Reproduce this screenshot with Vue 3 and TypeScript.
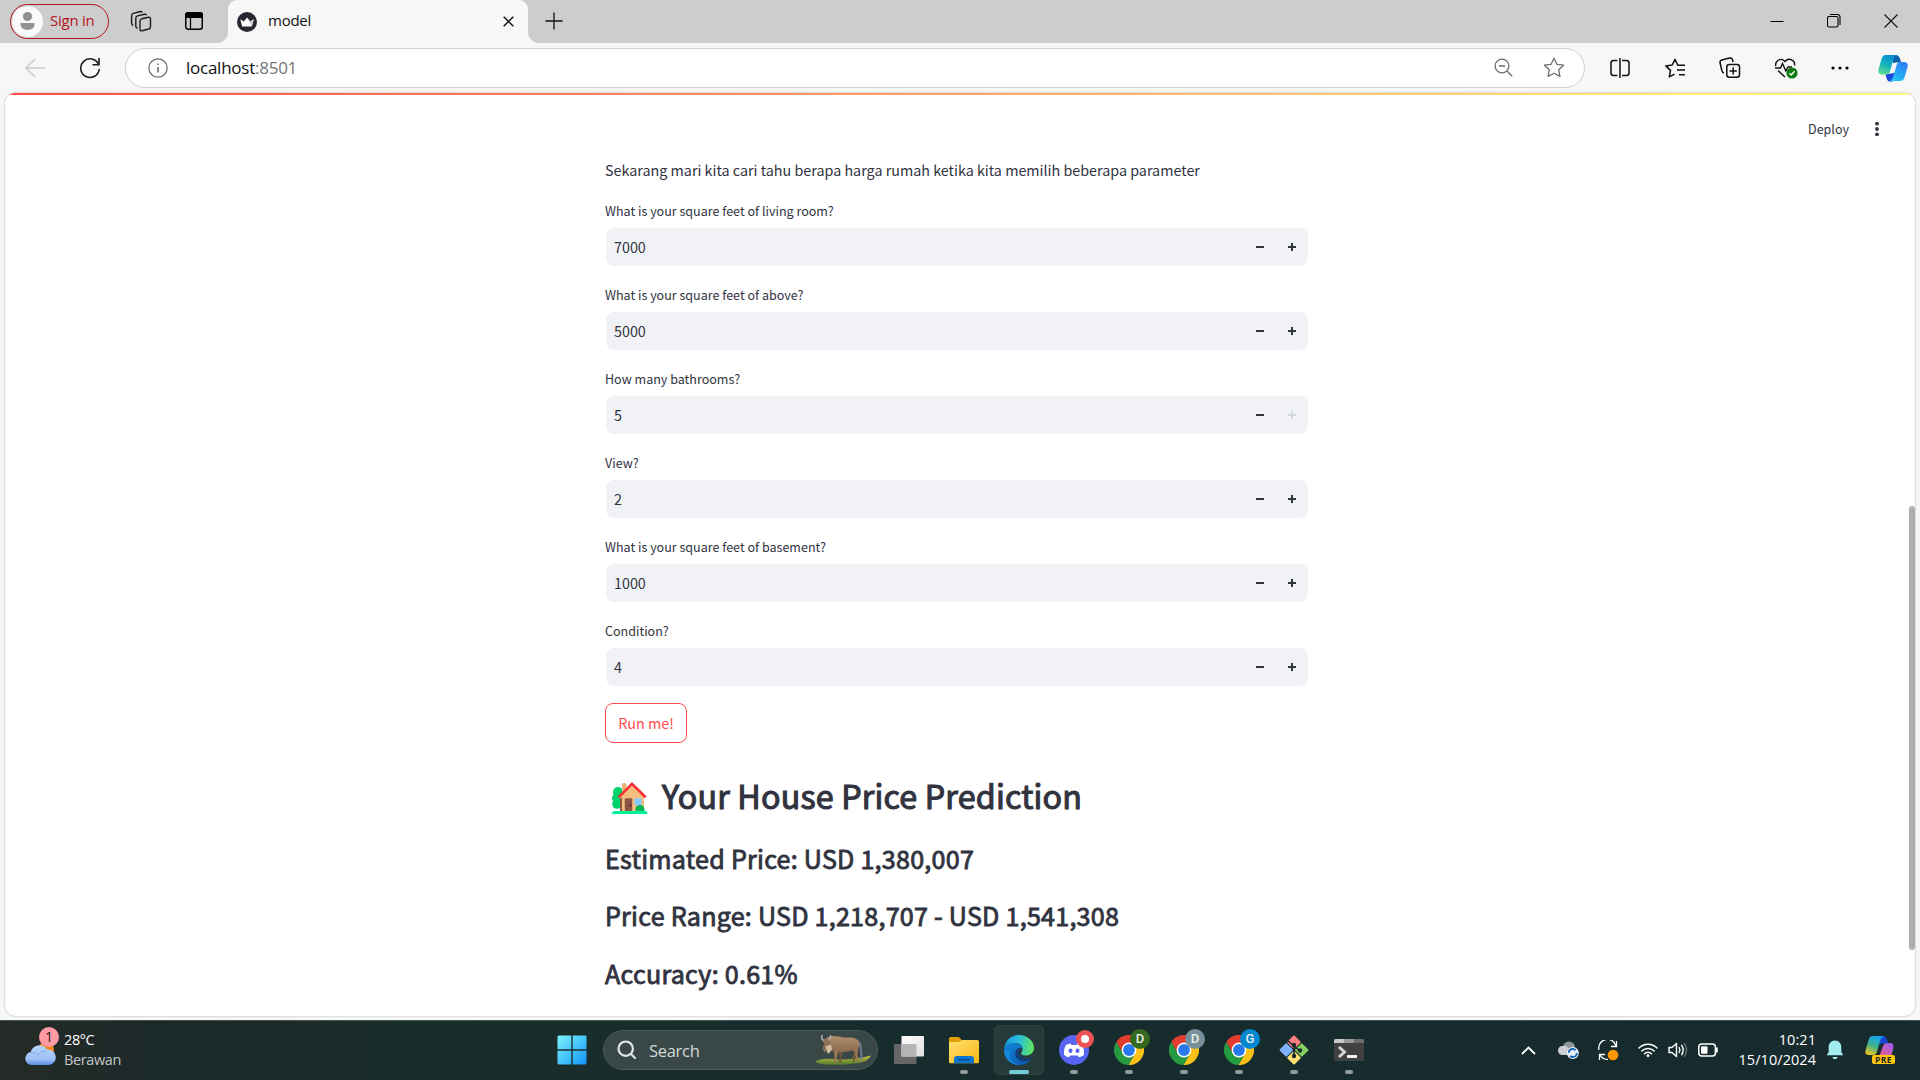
<script setup lang="ts">
interface Field {
  label: string
  value: number
  maxed?: boolean
}

interface TaskApp {
  name: string
  kind: 'folder' | 'edge' | 'discord' | 'chrome' | 'git' | 'terminal'
  badge?: string
  color?: string
}

const fields: Field[] = [
  { label: 'What is your square feet of living room?', value: 7000 },
  { label: 'What is your square feet of above?', value: 5000 },
  { label: 'How many bathrooms?', value: 5, maxed: true },
  { label: 'View?', value: 2 },
  { label: 'What is your square feet of basement?', value: 1000 },
  { label: 'Condition?', value: 4 },
]

const results: string[] = [
  'Estimated Price: USD 1,380,007',
  'Price Range: USD 1,218,707 - USD 1,541,308',
  'Accuracy: 0.61%',
]

const apps: TaskApp[] = [
  { name: 'files', kind: 'folder' },
  { name: 'edge', kind: 'edge' },
  { name: 'discord', kind: 'discord' },
  { name: 'chrome-1', kind: 'chrome', badge: 'D', color: '#33691e' },
  { name: 'chrome-2', kind: 'chrome', badge: 'D', color: '#78909c' },
  { name: 'chrome-3', kind: 'chrome', badge: 'G', color: '#0288d1' },
  { name: 'git', kind: 'git' },
  { name: 'terminal', kind: 'terminal' },
]
</script>

<template>
  <div class="desktop">
    <header class="tabstrip">
      <div class="signin">
        <svg class="avatar" width="31" height="31" viewBox="0 0 31 31">
          <circle cx="15.5" cy="15.5" r="15.5" fill="#fafafa" />
          <circle cx="15.5" cy="10.5" r="4.6" fill="#919191" />
          <path d="M8.5 17h14v1.2c0 3.600-3 5.600-7 5.600s-7-2-7-5.600z" fill="#919191" />
        </svg>
        <span>Sign in</span>
      </div>
      <svg class="workspaces" width="22" height="22" viewBox="0 0 22 22" fill="none" stroke="#1b1b1b" stroke-width="1.4" stroke-linejoin="round">
        <path d="M11.800 8.800 18.500 7.200q2-.3 2 1.700v7.500q0 2-1.800 2.600l-6.700 1.800q-2 .4-2-1.600V11q0-1.700 1.800-2.200z" />
        <path d="M7.500 18.200q-1.700-.4-1.700-2V8.300q0-1.900 1.800-2.400L14.500 4.200q1.700-.3 2 1.200" />
        <path d="M3.300 15.500q-1.700-.6-1.700-2.200V5.700q0-1.900 1.800-2.400L10.200 1.500q1.700-.3 2 1" />
      </svg>
      <svg class="tabmenu" width="20" height="20" viewBox="0 0 20 20">
        <rect x="1.750" y="1.750" width="16.500" height="16.500" rx="2.500" fill="none" stroke="#000" stroke-width="1.500" />
        <path d="M1 7V4a3 3 0 0 1 3-3h12a3 3 0 0 1 3 3v3z" />
        <path d="M6.500 6v12" stroke="#000" stroke-width="1.300" />
      </svg>
      <div class="tab">
        <svg width="20" height="20" viewBox="0 0 20 20">
          <circle cx="10" cy="10" r="10" fill="#262730" />
          <path d="M3.200 7.200 6.800 9.500 10 5.500l3.200 4 3.600-2.300-2 7.300H5.200z" fill="#fff" />
          <path d="M10 5.500l3.200 4 3.600-2.300-2 7.300z" fill="#d0d0d4" />
        </svg>
        <span class="tab-title">model</span>
        <svg width="11" height="11" viewBox="0 0 11 11" stroke="#111" stroke-width="1.500"><path d="M.7.7l9.600 9.600M10.300.7.7 10.300" /></svg>
      </div>
      <svg class="newtab" width="18" height="18" viewBox="0 0 18 18" stroke="#111" stroke-width="1.300"><path d="M9 .5v17M.5 9h17" /></svg>
      <div class="window-controls">
        <svg width="14" height="14" viewBox="0 0 14 14" fill="none" stroke="#000"><path d="M.5 7.500h13" /></svg>
        <svg width="14" height="14" viewBox="0 0 14 14" fill="none" stroke="#000" stroke-width="1.100">
          <rect x=".5" y="2.500" width="10.500" height="10.500" rx="1.500" />
          <path d="M3 .5h7.500a2.500 2.500 0 0 1 2.500 2.500V11" />
        </svg>
        <svg width="14" height="14" viewBox="0 0 14 14" fill="none" stroke="#111" stroke-width="1.100"><path d="M.5.5l13 13M13.500.5l-13 13" /></svg>
      </div>
    </header>

    <nav class="toolbar">
      <svg class="back" width="21" height="20" viewBox="0 0 21 20" fill="none" stroke="#cbcbcb" stroke-width="1.500"><path d="M20 10H1M10 1 1 10l9 9" /></svg>
      <svg class="reload" width="22" height="22" viewBox="0 0 22 22" fill="none" stroke="#1b1b1b" stroke-width="1.600">
        <path d="M19.600 7.500A9.300 9.300 0 1 0 20.300 12" /><path d="M20 1v6.700h-6.500" />
      </svg>
      <div class="address">
        <svg class="info" width="20" height="20" viewBox="0 0 20 20" fill="none" stroke="#6b6b6b" stroke-width="1.200">
          <circle cx="10" cy="10" r="9.200" /><path d="M10 9v5.500M10 5.500v1.600" stroke-width="1.500" />
        </svg>
        <span class="url">localhost<i>:8501</i></span>
        <svg class="zoomout" width="19" height="19" viewBox="0 0 19 19" fill="none" stroke="#6d6d6d" stroke-width="1.300">
          <circle cx="8" cy="8" r="6.900" /><path d="M5 8h6M13 13l5.200 5.200" />
        </svg>
        <svg class="star" width="22" height="21" viewBox="0 0 22 21" fill="none" stroke="#6d6d6d" stroke-width="1.300" stroke-linejoin="round">
          <path d="M11 1.300 13.900 7.300 20.600 8.200 15.700 12.800 17 19.400 11 16.200 5 19.400 6.300 12.800 1.400 8.200 8.100 7.300z" />
        </svg>
      </div>
      <div class="tools">
        <svg width="22" height="22" viewBox="0 0 22 22" fill="none" stroke="#111" stroke-width="1.500">
          <path d="M8.500 3.500H4.500A2.500 2.500 0 0 0 2 6v10a2.500 2.500 0 0 0 2.500 2.500h4M13 3.500h4.500A2.500 2.500 0 0 1 20 6v10a2.500 2.500 0 0 1-2.500 2.500H13M11 1v20" />
        </svg>
        <svg width="22" height="22" viewBox="0 0 22 22" fill="none" stroke="#111" stroke-width="1.500" stroke-linejoin="round">
          <path d="M21 8.300h-7.200L11 2.300 8.200 8 1.800 8.900l4.700 4.500-1.200 6.500 5.200-2.800M13 13h8M15 17.800h6" />
        </svg>
        <svg width="22" height="22" viewBox="0 0 22 22" fill="none" stroke="#111" stroke-width="1.500">
          <rect x="7.800" y="7.500" width="12.700" height="12.700" rx="2.500" />
          <path d="M14.200 10.300v7.200M10.600 13.900h7.200M5 16a3 3 0 0 1-2-2L1 5.800A2.500 2.500 0 0 1 2.800 3L10.500 1a2.500 2.500 0 0 1 3 1.800L14 5" />
        </svg>
        <svg width="24" height="22" viewBox="0 0 24 22" fill="none" stroke="#111" stroke-width="1.400">
          <path d="M1.800 9C.8 3.500 7 0 11 4.500 15 0 21.500 3.300 20.500 8.500M1 11h5.500l2-4.500 3.300 7.500 2.200-4h4M4 13.500l7 6.500" />
          <circle cx="18" cy="16" r="5.600" fill="#107c10" stroke="none" />
          <path d="m15.500 16.300 1.700 1.600 3.400-3.600" stroke="#fff" />
        </svg>
        <svg width="18" height="6" viewBox="0 0 18 6"><circle cx="2" cy="3" r="1.600" /><circle cx="9" cy="3" r="1.600" /><circle cx="16" cy="3" r="1.600" /></svg>
        <svg class="cp" width="30" height="28" viewBox="0 0 30 28">
          <defs>
            <linearGradient id="cpA" x1=".6" y1="0" x2=".2" y2="1"><stop offset="0" stop-color="#0a8fd6" /><stop offset=".5" stop-color="#12b3b8" /><stop offset="1" stop-color="#62de8c" /></linearGradient>
            <linearGradient id="cpB" x1=".8" y1="0" x2=".2" y2="1"><stop offset="0" stop-color="#2f7df6" /><stop offset="1" stop-color="#21c7f5" /></linearGradient>
          </defs>
          <path d="M13 19.500 20 18l-5 9q-1.500 1-3.500.5C9 27 8.500 24 7.500 20.500z" fill="#1b49df" />
          <path d="M14 1h4c3 0 4 3.500 5 7l-8 1z" fill="#0b62a8" />
          <path d="M8 1h11c-2.500.5-3.300 3-4 5.500l-3 11C11.400 19.500 10.500 20.500 8 20.500H4C1 20.500-.2 18.500.5 15.500L3.500 5C4.300 2.500 5.500 1 8 1z" fill="url(#cpA)" />
          <path d="M22 8h4c3 0 4.300 2 3.600 5l-3 10c-.8 2.500-2 4-4.500 4H11.500c2.500-.5 3.300-3 4-5.500l3-10C19.200 9.200 20 8 22 8z" fill="url(#cpB)" />
        </svg>
      </div>
    </nav>

    <main class="page">
      <div class="rainbow"></div>
      <div class="app-header">
        <span>Deploy</span>
        <svg width="6" height="16" viewBox="0 0 6 16" fill="#31333f"><circle cx="3" cy="2.700" r="1.900" /><circle cx="3" cy="8" r="1.900" /><circle cx="3" cy="13.300" r="1.900" /></svg>
      </div>
      <div class="column">
        <p class="intro">Sekarang mari kita cari tahu berapa harga rumah ketika kita memilih beberapa parameter</p>
        <div v-for="f in fields" :key="f.label" class="field">
          <label>{{ f.label }}</label>
          <div class="input">
            <span>{{ f.value }}</span>
            <svg width="8" height="8" viewBox="0 0 8 8" shape-rendering="crispEdges"><path d="M0 3h8v2H0z" fill="#31333f" /></svg>
            <svg width="8" height="8" viewBox="0 0 8 8" shape-rendering="crispEdges"><path d="M0 3h3V0h2v3h3v2H5v3H3V5H0z" :fill="f.maxed ? '#d5d8e3' : '#31333f'" /></svg>
          </div>
        </div>
        <button class="run">Run me!</button>
        <h1>
          <svg width="36" height="33" viewBox="0 0 36 33">
            <circle cx="6" cy="11" r="5" fill="#00d26a" /><circle cx="4.500" cy="17" r="4.500" fill="#00d26a" /><circle cx="5" cy="23" r="4.800" fill="#00d26a" />
            <path d="M10 3.500q0-1.500 1.500-1.500H13q1.500 0 1.500 1.500V12H10z" fill="#e9b577" />
            <path d="M8 15 20 3l12 12v15H8z" fill="#f3bd7e" />
            <path d="M8 18v12h2V16z" fill="#8c5543" />
            <rect x="12.800" y="17.300" width="7.400" height="12.700" rx="1" fill="#8c5543" /><circle cx="18.300" cy="24.500" r=".9" fill="#321b41" />
            <rect x="22.500" y="17.300" width="7" height="7" rx=".8" fill="#83cbff" />
            <path d="M6.500 16.300 20 2.800l13.700 13.500" fill="none" stroke="#f92f3a" stroke-width="2.600" />
            <circle cx="28" cy="28.500" r="4.500" fill="#00b259" />
            <path d="M0 33q0-3 2.500-3h30.500q2.500 0 2.500 3z" fill="#00f397" />
          </svg>
          <span>Your House Price Prediction</span>
        </h1>
        <h3 v-for="r in results" :key="r">{{ r }}</h3>
      </div>
      <div class="scroll-thumb"></div>
    </main>

    <footer class="taskbar">
      <div class="weather">
        <svg width="36" height="38" viewBox="0 0 36 38">
          <defs>
            <linearGradient id="cloud" x1="0" y1="0" x2="0" y2="1"><stop offset="0" stop-color="#b5d3fb" /><stop offset=".7" stop-color="#9fc1f5" /><stop offset="1" stop-color="#5d8ee6" /></linearGradient>
          </defs>
          <circle cx="21" cy="22" r="8" fill="#f7891c" />
          <path d="M6.500 37a6.500 6.500 0 0 1-.8-12.900A9 9 0 0 1 22 21.500a7.800 7.800 0 0 1 2 15.500z" fill="url(#cloud)" />
          <path d="M6 25q4-1 7 2 3-5 8-4" fill="none" stroke="#7fa8ec" stroke-width="1" />
        </svg>
        <b class="count">1</b>
        <div class="weather-text"><span>28°C</span><span class="dim">Berawan</span></div>
      </div>

      <svg class="start" width="30" height="30" viewBox="0 0 30 30">
        <defs><linearGradient id="win" x1="0" y1="0" x2="1" y2="1"><stop offset="0" stop-color="#7ef3ff" /><stop offset="1" stop-color="#0f95f7" /></linearGradient></defs>
        <path d="M1.500.5H14.300V14.300H.5V1.500zM15.700.5H28.500l1 1V14.300H15.700zM.5 15.700H14.300V29.500H1.500l-1-1zM15.700 15.700H29.500V28.500l-1 1H15.700z" fill="url(#win)" />
      </svg>
      <div class="search">
        <svg width="20" height="20" viewBox="0 0 20 20" fill="none" stroke="#dfe5e5" stroke-width="2.200" stroke-linecap="round"><circle cx="8.700" cy="8.700" r="7.200" /><path d="m14 14 4 4" /></svg>
        <span>Search</span>
        <svg class="gnu" width="58" height="32" viewBox="0 0 58 32">
          <defs>
            <linearGradient id="grass" x1="0" y1="0" x2="0" y2="1"><stop offset="0" stop-color="#c6c13e" /><stop offset="1" stop-color="#4d7a2d" /></linearGradient>
            <linearGradient id="hide" x1="0" y1="0" x2="0" y2="1"><stop offset="0" stop-color="#b08c68" /><stop offset="1" stop-color="#8a6a50" /></linearGradient>
          </defs>
          <path d="M1 28C5 24.500 14 24 25 25.500c12 0 22-1.500 32-4-2 5-10 8-17 8-14 2-32 2-39-1.500z" fill="url(#grass)" />
          <path d="M44.500 8q2.500 2 2.500 8l.7 10" fill="none" stroke="#777c9c" stroke-width="1.800" />
          <path d="M24 17l1.500 5-.5 7h1.800l.7-7 1.500-5zM38.500 15l2 4-2 4 .5 5h1.600l.4-4.500 2.500-5V14z" fill="#73563f" />
          <path d="M11 5c3-2.500 7-3.500 11-2.800 4 .3 8 1.600 12 1.300 5-.5 9 .5 11 4 .8 3 .5 7-2 9.500-2 .8-4 .2-6-.3-4 1.300-8 1.500-12 1-3 .5-6 0-7.500-1.500-2-3-3-7-6.500-11.200z" fill="url(#hide)" />
          <path d="M20 16l4 1.500-1 5.500-1 6.500h-1.900l.3-7zM40 15h4l-.7 5 1.700 7.500h-1.800L41 20z" fill="#9a7755" />
          <path d="M8.500 5.500 14 4.500l3 5 .5 6-4 4-.8-2.500-2 1.500-2-3.500 1.300-5z" fill="#8d705a" />
          <path d="M11.500 12.500l5.500-2 1 5-3.500 4.500-1.500-3z" fill="#d4be9f" />
          <path d="M9.500 6.500Q6.500 4 8.300 1M14.500 5.500q3.500-1.300 1.700-4.500" fill="none" stroke="#b3b5b2" stroke-width="1.400" />
        </svg>
      </div>
      <svg class="taskview" width="30" height="28" viewBox="0 0 30 28">
        <defs><linearGradient id="tv" x1="0" y1="0" x2="1" y2="1"><stop offset="0" stop-color="#fff" /><stop offset="1" stop-color="#dedede" /></linearGradient></defs>
        <rect y="8" width="22.500" height="20" rx="1" fill="#666" /><rect x="7.500" width="22.500" height="20.500" rx="1" fill="url(#tv)" />
        <path d="M7.500 8h15v12.500h-15z" fill="#b4b4b4" />
      </svg>

      <div class="apps">
        <div v-for="a in apps" :key="a.name" class="slot" :class="{ active: a.kind === 'edge' }">
          <svg v-if="a.kind === 'folder'" width="30" height="30" viewBox="0 0 30 30">
            <defs><linearGradient id="fold" x1="0" y1="0" x2="1" y2="1"><stop offset="0" stop-color="#ffdf70" /><stop offset="1" stop-color="#fbb912" /></linearGradient></defs>
            <path d="M0 3.500Q0 2 1.500 2H9q1 0 2 1l2 2.500V10H0z" fill="#e09f05" />
            <path d="M0 7h10l3-2h15.500Q30 5 30 6.500V27q0 1.300-1.300 1.300H1.300Q0 28.300 0 27z" fill="url(#fold)" />
            <path d="M5 28.300V24q0-3 3-3h14q3 0 3 3v4.300z" fill="#0b74cd" /><path d="M9 24.800h12" stroke="#06478e" stroke-width="1.300" />
          </svg>
          <svg v-else-if="a.kind === 'edge'" width="30" height="30" viewBox="0 0 30 30">
            <defs>
              <linearGradient id="eA" x1="0" y1=".3" x2="1" y2=".4"><stop offset="0" stop-color="#1b94dc" /><stop offset=".5" stop-color="#2cc0dc" /><stop offset="1" stop-color="#62e35c" /></linearGradient>
              <linearGradient id="eB" x1="0" y1="0" x2=".7" y2="1"><stop offset="0" stop-color="#1285d8" /><stop offset="1" stop-color="#0c5cb5" /></linearGradient>
            </defs>
            <path d="M.3 13C1.500 5 7.500 0 15 0c8.500 0 15 6 15 13 0 5-4 7.500-8.500 7.500-3 0-4.500-1.200-4.500-2.300 0-.8 1.500-1.200 1.500-4C18.500 9 12 7 7 9 3.500 10.300 1 12 .3 13z" fill="url(#eA)" />
            <path d="M0 15C0 11 4 8 9 8c5.500 0 9.500 3 9.500 6-1-1.500-3-1.500-4.500-.5-4 3-3 8 1.500 11 4 2.500 8 1.500 11.500-.8C24.500 27.500 20.500 30 15 30 6.500 30 0 23.500 0 15z" fill="url(#eB)" />
            <path d="M14 13.500c-3.500 2.500-3.500 7-.5 10.500 3 3.300 9 3.500 14-.5.500-.5 0-1-.5-.7-4 1.700-9 .7-11-3-1-2-.8-4 .5-5.500 0-1.300-1.300-1.500-2.500-.8z" fill="#123f78" />
            <path d="M6 15.500C4 22 8 28.500 15 30 7.500 30 1 25 0 16z" fill="#1a9ae8" opacity=".55" />
          </svg>
          <svg v-else-if="a.kind === 'discord'" width="30" height="30" viewBox="0 0 30 30">
            <circle cx="15" cy="15" r="15" fill="#5865f2" />
            <path d="M11.500 8.500Q9 9 7 10 4.500 14 5 20q2.500 2 5 2.200l1.200-1.800h7.600l1.200 1.800Q22.500 22 25 20q.5-6-2-10-2-1-4.500-1.500l-1 1.500h-5z" fill="#fff" />
            <ellipse cx="11.500" cy="15.700" rx="2" ry="2.200" fill="#5865f2" /><ellipse cx="18.500" cy="15.700" rx="2" ry="2.200" fill="#5865f2" />
          </svg>
          <svg v-else-if="a.kind === 'chrome'" width="30" height="30" viewBox="0 0 30 30">
            <path d="M2.300 7A15 15 0 0 1 28.300 8L15 15l-6 3.500z" fill="#e33b2e" />
            <path d="M28.300 8A15 15 0 0 1 14.400 30L21.060 18.500 15 8z" fill="#fbc116" />
            <path d="M14.400 30A15 15 0 0 1 2.300 7L8.940 18.500l12.120 0z" fill="#249a41" />
            <circle cx="15" cy="15" r="7.400" fill="#fff" /><circle cx="15" cy="15" r="5.900" fill="#2a79ec" />
          </svg>
          <svg v-else-if="a.kind === 'git'" width="30" height="30" viewBox="0 0 30 30">
            <g transform="rotate(45 15 15)">
              <rect x="4.500" y="4.500" width="10" height="10" rx="1" fill="#ff7f7f" /><rect x="15.500" y="4.500" width="10" height="10" rx="1" fill="#85d061" />
              <rect x="4.500" y="15.500" width="10" height="10" rx="1" fill="#80b3ff" /><rect x="15.500" y="15.500" width="10" height="10" rx="1" fill="#ffe070" />
            </g>
            <path d="M8.500 5.500 15 11v10M15 11l6 5" fill="none" stroke="#172b2c" stroke-width="1.600" />
            <circle cx="15" cy="10" r="2.200" fill="#172b2c" /><circle cx="15" cy="21" r="2.200" fill="#172b2c" /><circle cx="21" cy="15.500" r="2.200" fill="#172b2c" />
          </svg>
          <svg v-else width="30" height="30" viewBox="0 0 30 30">
            <rect y="4" width="30" height="22" rx="1.500" fill="#414141" />
            <path d="M0 8V5.500Q0 4 1.500 4H10v4z" fill="#c9c9c9" /><path d="M10 4h10v4H10z" fill="#999" /><path d="M20 4h8.500Q30 4 30 5.500V8H20z" fill="#6d6d6d" />
            <path d="m5 12 5.500 5L5 22" fill="none" stroke="#d2d2d2" stroke-width="3" /><path d="M13 21.500h10" stroke="#fff" stroke-width="2.800" />
          </svg>
          <i v-if="a.kind === 'discord'" class="rec"></i>
          <b v-if="a.badge" class="profile" :style="{ background: a.color }">{{ a.badge }}</b>
          <u class="running"></u>
        </div>
      </div>

      <div class="tray">
        <svg class="chev" width="15" height="9" viewBox="0 0 15 9" fill="none" stroke="#fff" stroke-width="1.800"><path d="m1 8 6.500-6.500L14 8" /></svg>
        <svg class="onedrive" width="21" height="18" viewBox="0 0 21 18">
          <circle cx="11" cy="6.500" r="6" fill="#8f9696" /><path d="M4.500 14a4.500 4.500 0 0 1 0-9q4-1.500 6.500 3l6 6z" fill="#cdd1d1" />
          <circle cx="14.800" cy="12" r="6" fill="#e8f1fa" /><circle cx="14.800" cy="12" r="4" fill="none" stroke="#1764b5" stroke-width="1.800" stroke-dasharray="9 3.500" />
        </svg>
        <svg class="sync" width="21" height="21" viewBox="0 0 21 21" fill="none" stroke="#fff" stroke-width="1.300">
          <path d="M1 10A8.500 8.500 0 0 1 18 6M18.500 1v5.500H13M1.500 20v-5.500H7M2 15q2.500 4.500 8 4.500" />
          <circle cx="15" cy="15" r="5.300" fill="#ff9800" stroke="none" />
        </svg>
        <svg class="wifi" width="20" height="16" viewBox="0 0 20 16" fill="none" stroke="#fff" stroke-width="1.500" stroke-linecap="round">
          <path d="M1 6a12.500 12.500 0 0 1 18 0M3.800 9a8.800 8.800 0 0 1 12.400 0M6.500 11.800a5 5 0 0 1 7 0" /><circle cx="10" cy="13.700" r="1.400" fill="#fff" stroke="none" />
        </svg>
        <svg class="speaker" width="20" height="16" viewBox="0 0 20 16" fill="none" stroke="#fff" stroke-width="1.400" stroke-linecap="round" stroke-linejoin="round">
          <path d="M1 5.500h3L8.500 1.500v13L4 10.500H1zM11.200 5.500q1.500 2.500 0 5M13.700 3.300q3 4.700 0 9.400" /><path d="M16.500 1.500q4 6.500 0 13" opacity=".35" />
        </svg>
        <svg class="battery" width="21" height="14" viewBox="0 0 21 14" fill="none" stroke="#fff" stroke-width="1.500">
          <rect x=".8" y="1" width="16.600" height="12" rx="3" /><rect x="3" y="3.200" width="6.500" height="7.600" rx="1" fill="#fff" stroke="none" /><path d="M18.800 4.500v5" stroke-width="2" />
        </svg>
        <div class="clock"><span>10:21</span><span>15/10/2024</span></div>
        <svg class="bell" width="18" height="20" viewBox="0 0 18 20" fill="#a0ecee"><path d="M9 .5c4 0 6.300 3 6.300 6.500v5l2 3.300H.7L2.700 12V7C2.700 3.500 5 .5 9 .5zM6.300 17h5.400Q11 19.300 9 19.300T6.300 17z" /></svg>
        <div class="copilot">
          <svg width="29" height="24" viewBox="0 0 29 24">
            <defs>
              <linearGradient id="trA" x1=".6" y1="0" x2=".2" y2="1"><stop offset="0" stop-color="#16a3ef" /><stop offset=".5" stop-color="#3db18d" /><stop offset="1" stop-color="#f3c51b" /></linearGradient>
              <linearGradient id="trB" x1=".8" y1="0" x2=".3" y2="1"><stop offset="0" stop-color="#9a5cf0" /><stop offset="1" stop-color="#f8617f" /></linearGradient>
            </defs>
            <path d="M14 0h4c3 0 4 3.500 5 7l-8 1z" fill="#1747d1" />
            <path d="M8 0h11c-2.500.5-3.300 3-4 5.500l-3 10C11.400 17.500 10.500 19 8 19H4C1 19-.2 17.500.5 14.500L3.500 4C4.300 1.500 5.500 0 8 0z" fill="url(#trA)" />
            <path d="M22 7h3c3 0 4 2 3.300 5l-3 12H13l5-14C18.700 8.200 20 7 22 7z" fill="url(#trB)" />
          </svg>
          <b>PRE</b>
        </div>
      </div>
    </footer>
  </div>
</template>

<style>
html,
body {
  margin: 0;
  overflow: hidden;
}
</style>

<style scoped>
* {
  box-sizing: border-box;
}
svg {
  display: block;
  flex: none;
}
.desktop {
  width: 1920px;
  height: 1080px;
  display: flex;
  flex-direction: column;
  background: #f7f7f7;
  font-family: 'Open Sans', 'Noto Sans', sans-serif;
  white-space: nowrap;
}

/* Tab strip */
.tabstrip {
  height: 43px;
  flex: none;
  display: flex;
  align-items: center;
  background: #cdcdcd;
  padding-left: 10px;
}
.signin {
  width: 99px;
  height: 35px;
  display: flex;
  align-items: center;
  gap: 7px;
  padding-left: 1px;
  border: 1.500px solid #b1171e;
  border-radius: 18px;
  color: #b1171e;
  font-size: 15px;
  letter-spacing: -0.25px;
}
.signin span {
  padding-bottom: 3px;
}
.workspaces {
  margin: 0 0 1px 21px;
}
.tabmenu {
  margin: 0 0 1px 32px;
}
.tab {
  position: relative;
  width: 300px;
  height: 43px;
  margin-left: 24px;
  padding: 0 14px 0 9px;
  display: flex;
  align-items: center;
  background: #f7f7f7;
  border-radius: 9px 9px 0 0;
}
.tab::before,
.tab::after {
  content: '';
  position: absolute;
  bottom: 0;
  width: 10px;
  height: 10px;
}
.tab::before {
  left: -10px;
  background: radial-gradient(circle at 0 0, #cdcdcd 9.500px, #f7f7f7 10px);
}
.tab::after {
  right: -10px;
  background: radial-gradient(circle at 100% 0, #cdcdcd 9.500px, #f7f7f7 10px);
}
.tab-title {
  flex: 1;
  margin-left: 11px;
  padding-bottom: 3px;
  font-size: 15px;
  letter-spacing: -0.25px;
  color: #111;
}
.newtab {
  margin: 0 0 1px 17px;
}
.window-controls {
  margin-left: auto;
  margin-right: 22px;
  padding-bottom: 1px;
  display: flex;
  gap: 43px;
}

/* Toolbar */
.toolbar {
  height: 50px;
  flex: none;
  display: flex;
  align-items: center;
  padding-left: 25px;
}
.back {
  margin-bottom: 1px;
}
.reload {
  margin: 0 0 1px 33px;
}
.address {
  width: 1460px;
  height: 40px;
  margin-left: 24px;
  padding: 0 19px 1px 22px;
  display: flex;
  align-items: center;
  background: #fff;
  border: 1px solid #cfcfcf;
  border-radius: 20px;
}
.url {
  flex: 1;
  margin-left: 18px;
  padding-bottom: 1px;
  font-size: 17px;
  letter-spacing: -0.25px;
  color: #111;
}
.url i {
  font-style: normal;
  color: #767676;
}
.star {
  margin-left: 30px;
}
.tools {
  flex: 1;
  display: flex;
  align-items: center;
  gap: 33px;
  margin-left: 24px;
  padding-bottom: 1px;
}
.cp {
  margin-left: -4px;
}

/* Streamlit page */
.page {
  position: relative;
  height: 923px;
  flex: none;
  margin: 0 5px;
  background: #fff;
  border-radius: 10px;
  box-shadow: 0 0 2px rgba(0, 0, 0, 0.35);
  overflow: hidden;
  font-family: 'Noto Sans CJK SC', sans-serif;
  color: #31333f;
}
.rainbow {
  height: 2px;
  background: linear-gradient(90deg, #ff4b4b, #fffd80);
}
.app-header {
  height: 63px;
  display: flex;
  align-items: center;
  justify-content: flex-end;
  gap: 25px;
  padding: 5px 35px 0 0;
  font-size: 12.540px;
}
.app-header span {
  padding-bottom: 2px;
}
.column {
  width: 703px;
  margin-left: 600px;
  display: flex;
  flex-direction: column;
  align-items: stretch;
}
.intro {
  margin: 0 0 18px;
  height: 24px;
  line-height: 24px;
  font-size: 14.330px;
}
.field {
  height: 84px;
}
.field label {
  display: block;
  height: 28px;
  line-height: 22px;
  font-size: 12.540px;
}
.input {
  height: 38px;
  margin-left: 1px;
  padding: 0 12px 0 8px;
  display: flex;
  align-items: center;
  gap: 24px;
  background: #f0f2f6;
  border-radius: 8px;
  font-size: 14.330px;
}
.input span {
  flex: 1;
  padding-bottom: 2px;
}
.run {
  width: 82px;
  height: 40px;
  margin: -1px 0 0;
  padding: 0 0 2px;
  align-self: flex-start;
  background: #fff;
  border: 1px solid #ff4b4b;
  border-radius: 8px;
  color: #ff4b4b;
  font: 14.330px 'Noto Sans CJK SC', sans-serif;
}
h1 {
  height: 44px;
  margin: 32px 0 22px;
  padding-left: 7px;
  display: flex;
  align-items: center;
  gap: 14px;
  font-size: 32.240px;
  line-height: 44px;
  font-weight: 400;
  letter-spacing: 0.18px;
  -webkit-text-stroke: 1.1px #31333f;
}
h1 span {
  padding-bottom: 4px;
}
h3 {
  height: 34px;
  margin: 0 0 23.400px;
  font-size: 25.080px;
  line-height: 34px;
  font-weight: 400;
  letter-spacing: 0.25px;
  -webkit-text-stroke: 0.85px #31333f;
}
.scroll-thumb {
  position: absolute;
  right: 0;
  top: 413px;
  width: 6px;
  height: 444px;
  border-radius: 3px;
  background: #adaeb4;
}

/* Taskbar */
.taskbar {
  height: 60px;
  margin-top: 4px;
  padding-bottom: 1px;
  flex: none;
  display: flex;
  align-items: center;
  border-top: 1px solid #47524f;
  background: linear-gradient(90deg, #252b26, #1c292a 150px, #192d2b 400px, #172c2d 900px, #172b2e);
  color: #fff;
  font-size: 14.500px;
}
.weather {
  position: relative;
  width: 532px;
  height: 50px;
  margin-left: 25px;
  display: flex;
  align-items: center;
}
.weather > svg {
  margin-top: -7px;
}
.count {
  position: absolute;
  left: 14px;
  top: 2px;
  width: 20px;
  height: 20px;
  border-radius: 50%;
  background: #ff99a4;
  color: #222;
  font-size: 14px;
  font-weight: 400;
  line-height: 20px;
  text-align: center;
}
.weather-text {
  display: flex;
  flex-direction: column;
  margin: 0 0 1px 3px;
  line-height: 20px;
  letter-spacing: -0.4px;
}
.dim {
  color: #c3c7c7;
}
.search {
  width: 275px;
  height: 40px;
  margin-left: 16px;
  padding: 0 5px 0 13px;
  display: flex;
  align-items: center;
  border: 1px solid #4c5a59;
  border-radius: 20px;
  background: #394847;
}
.search span {
  flex: 1;
  margin-left: 12px;
  font-size: 16.500px;
  letter-spacing: -0.3px;
  color: #d3d8d8;
}
.taskview {
  margin-left: 16px;
}
.apps {
  display: flex;
  gap: 5px;
  margin-left: 15px;
}
.slot {
  position: relative;
  width: 50px;
  height: 50px;
  display: flex;
  align-items: center;
  justify-content: center;
  border-radius: 5px;
}
.slot.active {
  background: #273a3a;
  border: 1px solid #314343;
}
.running {
  position: absolute;
  left: 21px;
  bottom: 1px;
  width: 8px;
  height: 4px;
  border-radius: 2px;
  background: #919b9b;
}
.active .running {
  left: 14px;
  bottom: 0;
  width: 20px;
  background: #6fd0d9;
}
.rec,
.profile {
  position: absolute;
  left: 26px;
  top: 4px;
  width: 20px;
  height: 20px;
  border-radius: 50%;
}
.rec {
  width: 18px;
  height: 18px;
  left: 27px;
  top: 5px;
  border: 5px solid #ed5252;
  background: #fff;
}
.profile {
  color: #e8eee4;
  font: 500 13px/20px Roboto, sans-serif;
  text-align: center;
}
.tray {
  flex: 1;
  display: flex;
  align-items: center;
}
.chev {
  margin-left: 147px;
}
.onedrive {
  margin-left: 22px;
}
.sync {
  margin-left: 19px;
}
.wifi {
  margin-left: 19px;
}
.speaker,
.battery {
  margin-left: 10px;
}
.clock {
  width: 97px;
  display: flex;
  flex-direction: column;
  align-items: flex-end;
  padding-bottom: 1px;
  line-height: 20px;
  letter-spacing: 0.05px;
}
.bell {
  margin-left: 10px;
}
.copilot {
  position: relative;
  width: 30px;
  height: 28px;
  margin-left: 21px;
}
.copilot b {
  position: absolute;
  left: 7px;
  bottom: 0;
  width: 23px;
  height: 9px;
  border-radius: 2px;
  background: #ffc70a;
  color: #222;
  font: 700 8.500px/9px 'Open Sans', sans-serif;
  letter-spacing: 0.4px;
  text-align: center;
}
</style>
